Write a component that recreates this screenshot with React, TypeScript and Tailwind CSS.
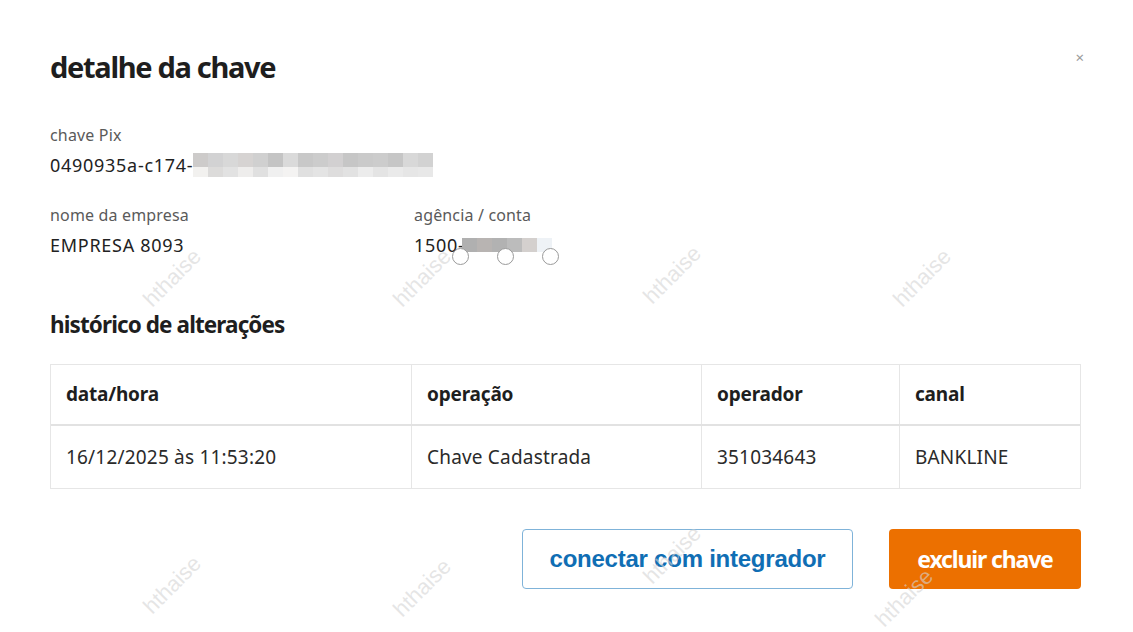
import React from 'react';

const sans = { fontFamily: '"Noto Sans", "Open Sans", sans-serif' };

// pixelated redaction blocks (top row / bottom row greys)
const KEY_TOP = ['#cdcbca', '#d2d2d3', '#d8d8d8', '#d6d3d2', '#d0d0d0', '#c4c4c4', '#dadada', '#c8c8c8', '#cccccc', '#d2d0d1', '#c6c6c6', '#cacaca', '#cccccc', '#c6c6c6', '#d8d8d8', '#d2d2d2'];
const KEY_BOTTOM = ['#f2f1ef', '#dcdbda', '#e2e2e2', '#eeedec', '#e0e0e0', '#f0f0f0', '#f4f3f2', '#e0e0e0', '#e4e4e4', '#dedddd', '#e2e2e2', '#ececec', '#e4e4e4', '#eaeaea', '#e6e6e6', '#e8e8e8'];
const ACC = ['#b0b0b0', '#b8b4b2', '#b2b2b2', '#bcbcbc', '#d4d0ce', '#eef2f6'];

const WATERMARKS: Array<[number, number]> = [
  [173, 278], [423, 278], [673, 275], [923, 278],
  [173, 585], [423, 588], [673, 555], [905, 598],
];

const HEADERS = ['data/hora', 'operação', 'operador', 'canal'];
const ROW = ['16/12/2025 às 11:53:20', 'Chave Cadastrada', '351034643', 'BANKLINE'];
const COL_W = ['w-[361px]', 'w-[290px]', 'w-[198px]', 'flex-1'];

function Field({ label, children, className = '' }: { label: string; children: React.ReactNode; className?: string }) {
  return (
    <div className={className}>
      <div className="text-[16px] leading-5 tracking-[0.01em] text-[#5a5a5a]">{label}</div>
      <div className="mt-[8px] flex h-[24px] items-center text-[18px] leading-6 tracking-[0.04em] text-[#222]">{children}</div>
    </div>
  );
}

export default function App() {
  return (
    <div className="relative h-[632px] w-[1133px] overflow-hidden bg-white" style={sans}>
      <div className="pl-[50px] pr-[52px] pt-[46px]">
        <div className="flex items-start justify-between">
          <h1 className="text-[29px] font-bold leading-[42px] tracking-[-0.045em] text-[#1e1e1e]">detalhe da chave</h1>
          <button type="button" className="-mr-[3px] mt-[3px] text-[15px] leading-4 text-[#9a9a9a]">×</button>
        </div>

        <Field label="chave Pix" className="mt-[37px]">
          <span>0490935a-c174-</span>
          <span className="flex flex-col">
            <span className="flex">
              {KEY_TOP.map((c, i) => (
                <span key={i} className="h-[14px] w-[15px]" style={{ background: c }} />
              ))}
            </span>
            <span className="flex">
              {KEY_BOTTOM.map((c, i) => (
                <span key={i} className="h-[10px] w-[15px]" style={{ background: c }} />
              ))}
            </span>
          </span>
        </Field>

        <div className="mt-[28px] flex">
          <Field label="nome da empresa" className="w-[364px]">
            EMPRESA 8093
          </Field>
          <Field label="agência / conta">
            <span>1500-</span>
            <span className="relative -ml-[3px] flex h-[14px]">
              {ACC.map((c, i) => (
                <span key={i} className="h-[14px] w-[15px]" style={{ background: c }} />
              ))}
              <span className="absolute -left-[10px] top-[10px] flex gap-[28px]">
                <span className="h-[17px] w-[17px] rounded-full border border-[#9a9a9a] bg-white" />
                <span className="h-[17px] w-[17px] rounded-full border border-[#9a9a9a] bg-white" />
                <span className="h-[17px] w-[17px] rounded-full border border-[#9a9a9a] bg-white" />
              </span>
            </span>
          </Field>
        </div>

        <h2 className="mt-[52px] text-[22.5px] font-bold leading-8 tracking-[-0.04em] text-[#1e1e1e]">histórico de alterações</h2>

        <div className="mt-[23px] border border-[#e6e6e6]">
          <div className="flex h-[61px] border-b-2 border-[#e2e2e2]">
            {HEADERS.map((h, i) => (
              <div key={h} className={`${COL_W[i]} flex items-center px-[15px] text-[19px] font-bold tracking-[-0.01em] text-[#1e1e1e] ${i < 3 ? 'border-r border-[#e6e6e6]' : ''}`}>
                {h}
              </div>
            ))}
          </div>
          <div className="flex h-[62px]">
            {ROW.map((v, i) => (
              <div key={v} className={`${COL_W[i]} flex items-center px-[15px] text-[19px] tracking-[0.01em] text-[#2a2a2a] ${i < 3 ? 'border-r border-[#e6e6e6]' : ''}`}>
                {v}
              </div>
            ))}
          </div>
        </div>

        <div className="mt-[40px] flex justify-end gap-[36px]">
          <button
            type="button"
            className="h-[60px] w-[331px] rounded-[4px] border border-[#7fb3d9] bg-white text-[24px] font-bold tracking-[-0.01em] text-[#106eb4]"
            style={{ fontFamily: '"Liberation Sans", Arial, sans-serif' }}
          >
            conectar com integrador
          </button>
          <button
            type="button"
            className="h-[60px] w-[192px] rounded-[4px] bg-[#ec7000] text-[23px] font-bold tracking-[-0.05em] text-white"
          >
            excluir chave
          </button>
        </div>
      </div>

      {WATERMARKS.map(([x, y], i) => (
        <span
          key={i}
          className="pointer-events-none absolute -rotate-45 select-none text-[22px] leading-6 text-[#d4d4d4]/60"
          style={{ left: x - 36, top: y - 12, fontFamily: '"Liberation Sans", Arial, sans-serif' }}
        >
          hthaise
        </span>
      ))}
    </div>
  );
}
